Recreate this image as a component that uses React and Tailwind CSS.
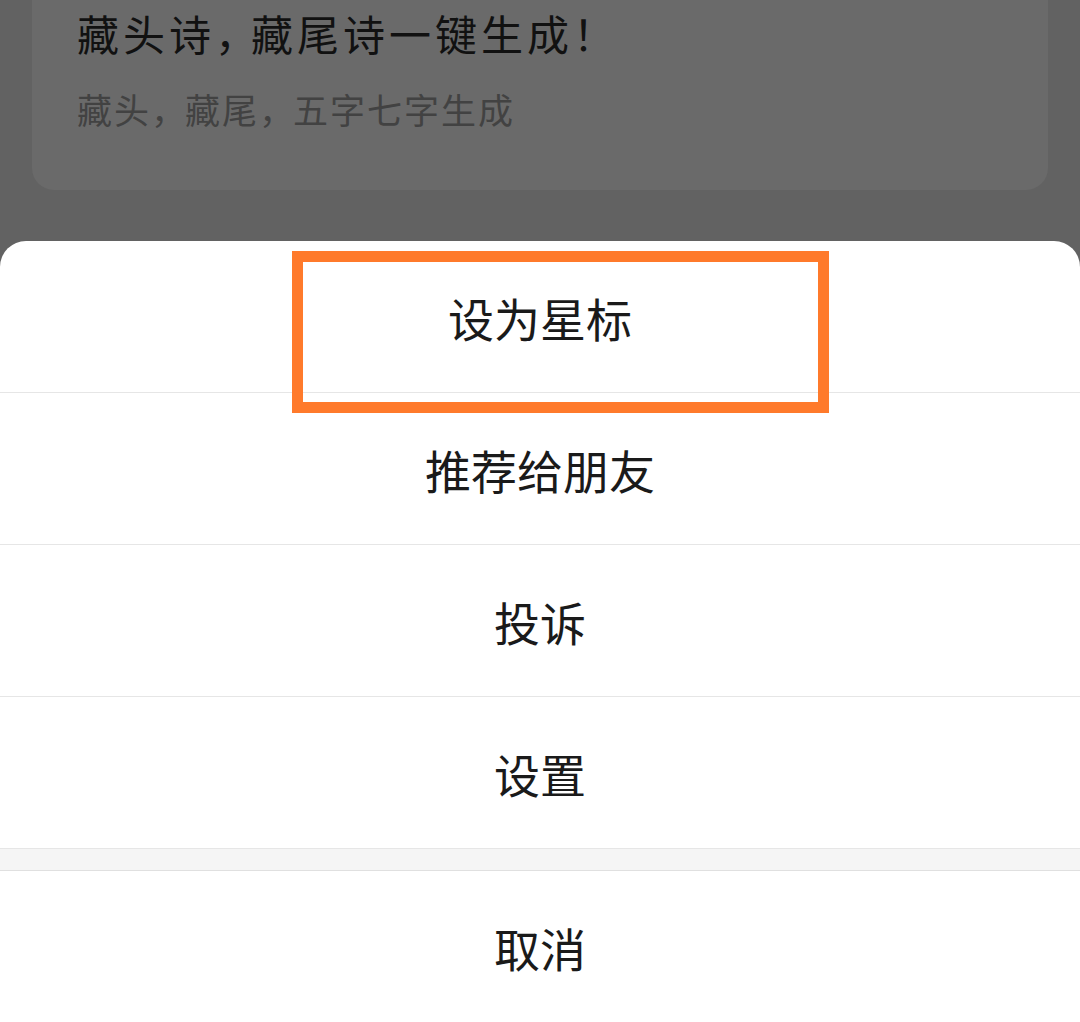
const FONT = "font-['Noto_Sans_CJK_SC','Noto_Sans',sans-serif]"

const actions = ['设为星标', '推荐给朋友', '投诉', '设置']

function SheetRow({ label, highlight }) {
  return (
    <div className="relative flex h-[152px] items-center justify-center border-b border-[#e6e6e6]">
      <span className="text-[46px] leading-none text-[#1a1a1a]">{label}</span>
      {highlight && (
        <div className="pointer-events-none absolute left-[292px] top-[10px] z-10 h-[162px] w-[537px] border-[11px] border-[#ff7a2b]" />
      )}
    </div>
  )
}

export default function App() {
  return (
    <div className={`${FONT} flex h-[1022px] w-[1080px] flex-col overflow-hidden bg-[#626262]`}>
      <div className="px-[32px]">
        <div className="-mt-[20px] rounded-[22px] bg-[#6a6a6a] px-[45px] pb-[60px] pt-[29px]">
          <p className="text-[42px] leading-[48px] tracking-[4px] text-[#111111]">
            藏头诗<span className="tracking-[-6px]">，</span>藏尾诗一键生成！
          </p>
          <p className="mt-[31px] text-[35px] leading-[42px] tracking-[2px] text-[#424242]">
            藏头<span className="tracking-[-1px]">，</span>藏尾<span className="tracking-[-1px]">，</span>五字七字生成
          </p>
        </div>
      </div>

      <div className="mt-auto rounded-t-[26px] bg-white">
        {actions.map((a, i) => (
          <SheetRow key={a} label={a} highlight={i === 0} />
        ))}
        <div className="h-[22px] border-b border-[#e0e0e0] bg-[#f5f5f5]" />
        <div className="flex h-[151px] items-center justify-center">
          <span className="text-[46px] leading-none text-[#1a1a1a]">取消</span>
        </div>
      </div>
    </div>
  )
}
